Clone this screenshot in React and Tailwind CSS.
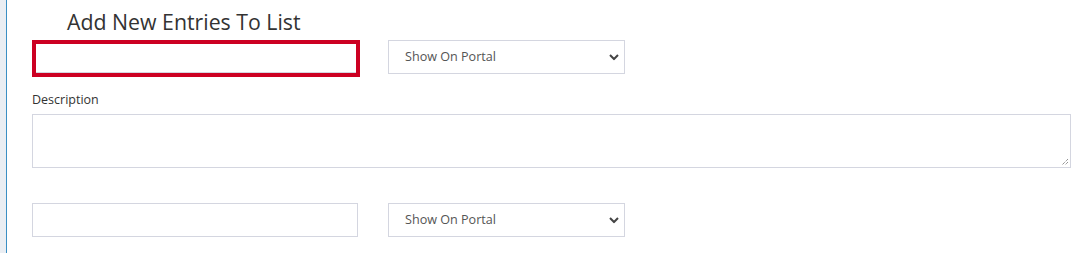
import React from "react";

function Chevron() {
  return (
    <svg width="10" height="7" viewBox="0 0 10 7" className="absolute right-[5px] top-1/2 -translate-y-1/2">
      <path d="M1 1.5 L5 5.5 L9 1.5" fill="none" stroke="#444" strokeWidth="2" />
    </svg>
  );
}

function Select() {
  return (
    <div className="relative w-[237px] h-[34px] border border-[#d4d6e0] bg-white flex items-center pl-[16px] text-[12.6px] text-[#555]">
      <span>Show On Portal</span>
      <Chevron />
    </div>
  );
}

export default function App() {
  return (
    <div className="w-[1088px] h-[253px] flex bg-white overflow-hidden" style={{ fontFamily: '"Open Sans", "Noto Sans", sans-serif' }}>
      <div className="w-[6px] bg-[#eaeef3]" />
      <div className="w-[1px] bg-[#3b8fc4]" />
      <div className="flex-1 pl-[25px] pr-[17px]">
        <div className="pl-[35px] pt-[7px] h-[40px] text-[21.3px] leading-[30px] text-[#333]">Add New Entries To List</div>
        <div className="flex items-start gap-[28px]">
          <div className="w-[328px] h-[37px] border-4 border-[#cc0022] bg-white">
            <div className="h-full border-b border-[#d4d6e0]" />
          </div>
          <Select />
        </div>
        <div className="mt-[15px] text-[12.5px] leading-[16px] text-[#333]">Description</div>
        <div className="relative mt-[6px] h-[54px] border border-[#d4d6e0] bg-white">
          <svg width="8" height="8" viewBox="0 0 8 8" className="absolute right-[1px] bottom-[1px]">
            <path d="M7 1 L1 7 M7 4 L4 7" stroke="#666" strokeWidth="1" strokeDasharray="1 1" />
          </svg>
        </div>
        <div className="flex items-start gap-[30px] mt-[35px]">
          <div className="w-[326px] h-[34px] border border-[#d4d6e0] bg-white" />
          <Select />
        </div>
      </div>
    </div>
  );
}
